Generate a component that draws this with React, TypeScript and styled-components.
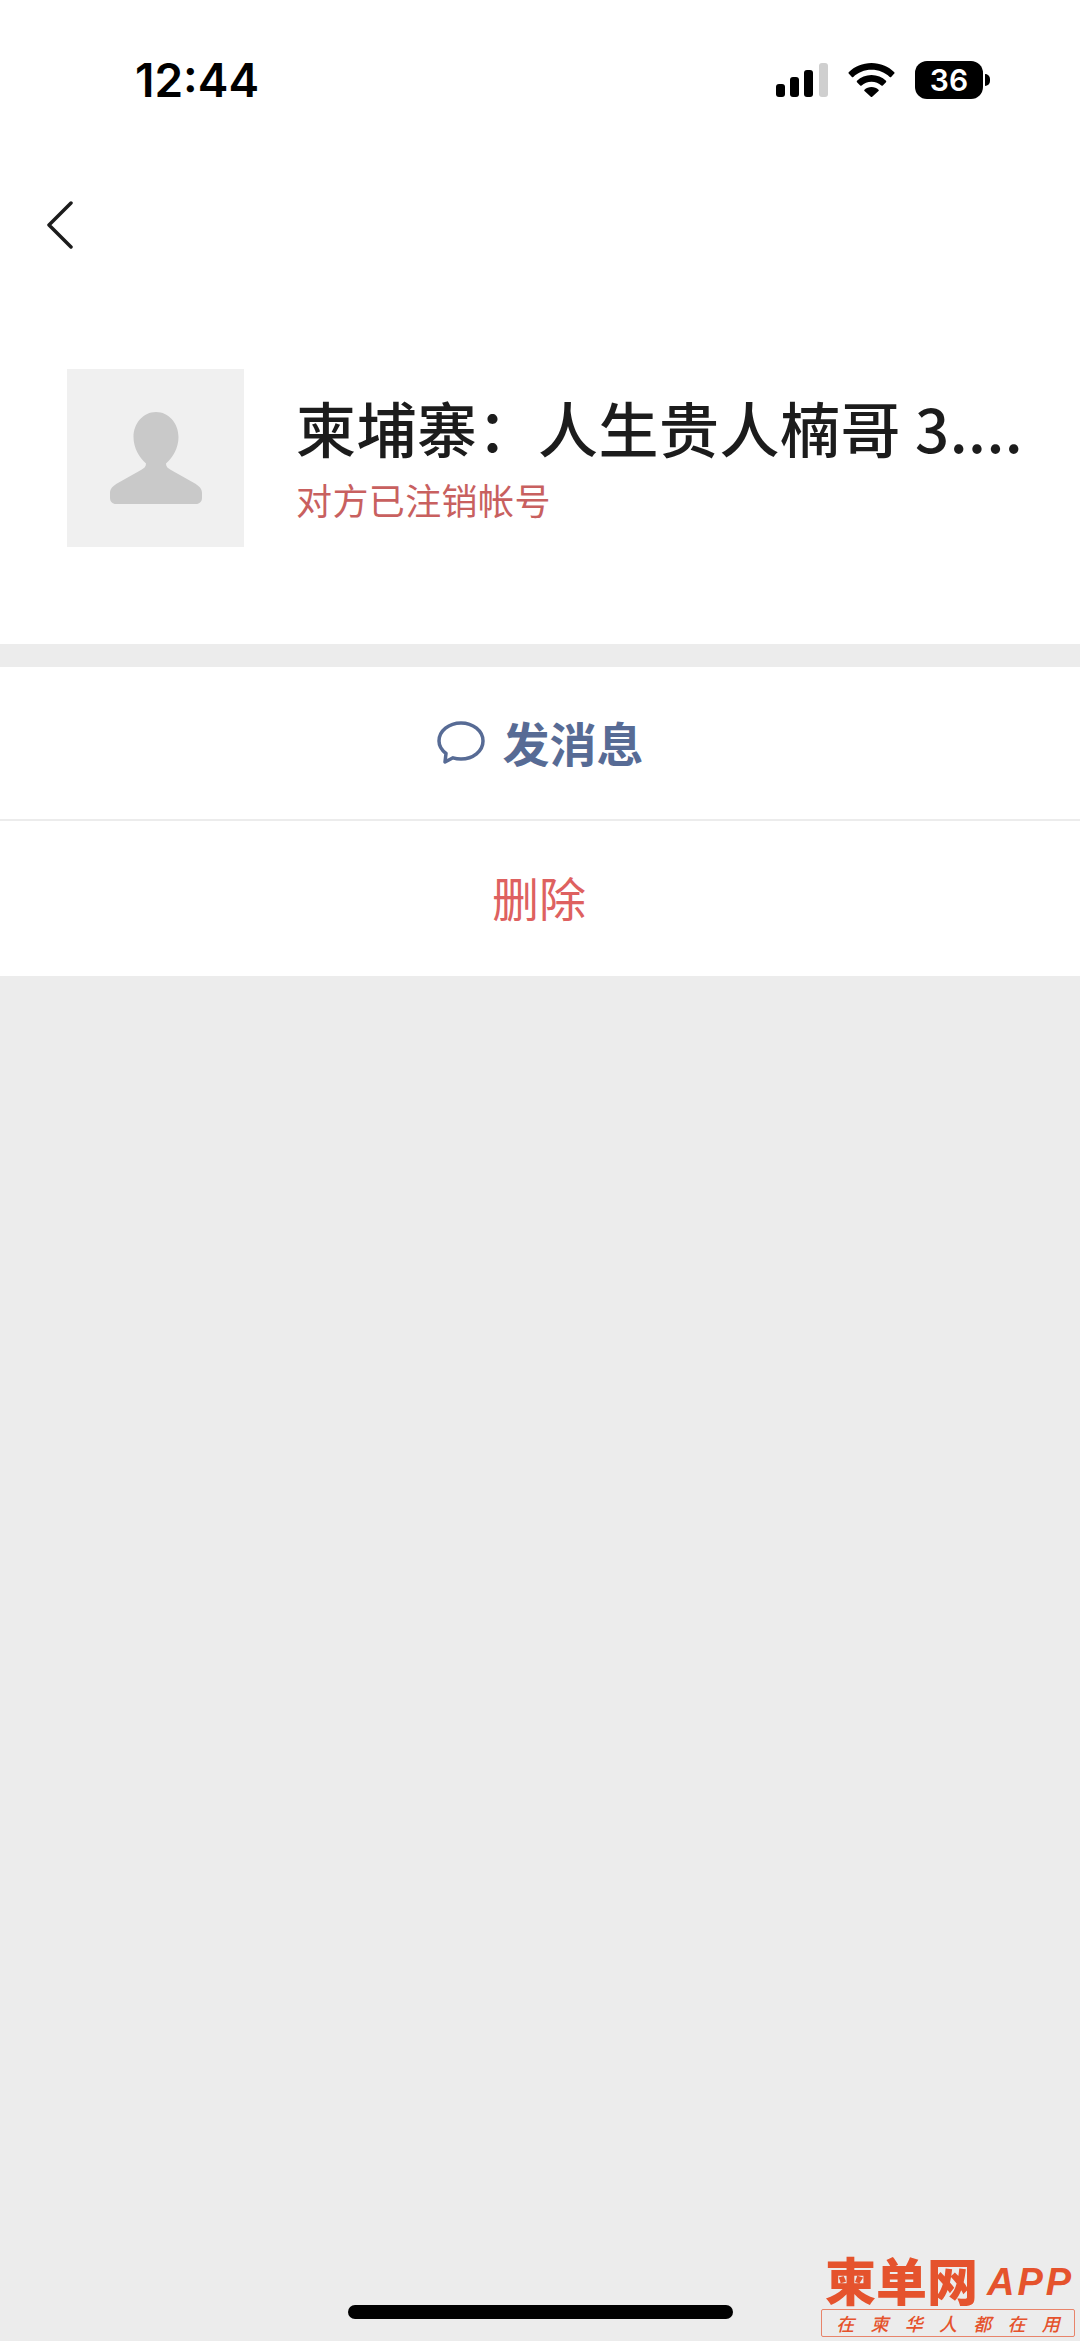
import React from 'react';
import styled, { createGlobalStyle } from 'styled-components';

const GlobalStyle = createGlobalStyle`
  * {
    box-sizing: border-box;
    margin: 0;
    padding: 0;
  }

  body {
    background: #ececec;
    font-family: "Noto Sans CJK SC", "Noto Sans", sans-serif;
  }
`;

const Page = styled.div`
  position: relative;
  width: 1080px;
  height: 2341px;
  overflow: hidden;
  display: flex;
  flex-direction: column;
  background: #ececec;
`;

const Header = styled.header`
  background: #fff;
  height: 644px;
  display: flex;
  flex-direction: column;
`;

const StatusBar = styled.div`
  height: 160px;
  padding: 61px 97px 0 135px;
  display: flex;
  justify-content: space-between;
  align-items: flex-start;
`;

const Time = styled.span`
  font-family: Inter, sans-serif;
  font-size: 46px;
  line-height: 38px;
  font-weight: 600;
  color: #000;
`;

const StatusIcons = styled.div`
  display: flex;
  align-items: center;
  height: 38px;
  gap: 20px;
`;

const Battery = styled.div`
  position: relative;
  width: 68px;
  height: 38px;
  border-radius: 12px;
  background: #000;
  color: #fff;
  font-family: Inter, sans-serif;
  font-size: 30px;
  font-weight: 600;
  line-height: 38px;
  text-align: center;

  &::after {
    content: '';
    position: absolute;
    right: -7px;
    top: 13px;
    width: 5px;
    height: 12px;
    border-radius: 0 6px 6px 0;
    background: #000;
  }
`;

const BackRow = styled.div`
  height: 209px;
  padding: 41px 0 0 46px;
`;

const Profile = styled.div`
  display: flex;
  align-items: center;
  padding-left: 67px;
  gap: 52px;
`;

const Avatar = styled.div`
  width: 177px;
  height: 178px;
  flex: none;
  background: #f0f0f0;
  display: flex;
  align-items: center;
  justify-content: center;
`;

const Info = styled.div`
  display: flex;
  flex-direction: column;
  padding-bottom: 8px;
`;

const Name = styled.h1`
  font-size: 60px;
  line-height: 84px;
  font-weight: 500;
  letter-spacing: 0.5px;
  color: #1c1c1c;
  white-space: nowrap;
  margin-bottom: 6px;
`;

const Notice = styled.p`
  font-size: 36px;
  line-height: 48px;
  font-weight: 400;
  letter-spacing: 0.4px;
  color: #c8605f;
  white-space: nowrap;
`;

const Actions = styled.section`
  margin-top: 23px;
  background: #fff;
  display: flex;
  flex-direction: column;
`;

const ActionRow = styled.div<{ $divided?: boolean; $height: number }>`
  height: ${(props) => props.$height}px;
  display: flex;
  align-items: center;
  justify-content: center;
  gap: 18px;
  border-bottom: ${(props) => (props.$divided ? '2px solid #ececec' : 'none')};
`;

const ActionLabel = styled.span<{ $danger?: boolean }>`
  font-size: 47px;
  line-height: 60px;
  font-weight: ${(props) => (props.$danger ? 400 : 700)};
  color: ${(props) => (props.$danger ? '#de6160' : '#576b95')};
  margin-bottom: 3px;
  margin-right: ${(props) => (props.$danger ? 2 : 0)}px;
`;

const HomeBar = styled.div`
  position: absolute;
  left: 348px;
  bottom: 22px;
  width: 385px;
  height: 14px;
  border-radius: 7px;
  background: #000;
`;

const Watermark = styled.div`
  position: absolute;
  right: 5px;
  bottom: 4px;
  width: 254px;
  display: flex;
  flex-direction: column;
  align-items: stretch;
  color: #e5532d;
`;

const BrandRow = styled.div`
  display: flex;
  align-items: flex-end;
  padding-left: 4px;
  height: 56px;
`;

const BrandName = styled.span`
  font-size: 51px;
  line-height: 56px;
  font-weight: 900;
`;

const BrandApp = styled.span`
  font-family: "Liberation Sans", sans-serif;
  font-size: 38px;
  line-height: 50px;
  font-weight: 700;
  font-style: italic;
  letter-spacing: 3px;
  margin-left: 9px;
`;

const Slogan = styled.div`
  height: 28px;
  margin-top: 2px;
  border: 1px solid #e8846a;
  border-radius: 2px;
  display: flex;
  align-items: center;
  justify-content: space-around;
  padding: 0 6px;
  font-size: 18px;
  line-height: 24px;
  font-weight: 500;
  font-style: italic;
`;

const slogan = ['在', '柬', '华', '人', '都', '在', '用'];

export default function App() {
  return (
    <Page>
      <GlobalStyle />
      <Header>
        <StatusBar>
          <Time>12:44</Time>
          <StatusIcons>
            <svg width="52" height="34" viewBox="0 0 52 34">
              <rect x="0" y="21" width="9" height="13" rx="3" fill="#000" />
              <rect x="14" y="14" width="9" height="20" rx="3" fill="#000" />
              <rect x="28" y="7" width="9" height="27" rx="3" fill="#000" />
              <rect x="43" y="0" width="9" height="34" rx="3" fill="#cfcfcf" />
            </svg>
            <svg width="47" height="34" viewBox="0 0 47 34" fill="#000">
              <path d="M23.5 0C14.6 0 6.6 3.5.7 9.2c-.4.4-.4 1 0 1.4l3.2 3.3c.4.4 1 .4 1.4 0C10 9.400 16.400 6.700 23.500 6.700s13.500 2.700 18.200 7.200c.4.4 1 .4 1.400 0l3.200-3.300c.4-.4.4-1 0-1.400C40.400 3.500 32.400 0 23.500 0z" />
              <path d="M23.500 12c-5.600 0-10.700 2.200-14.500 5.800-.4.4-.4 1 0 1.400l3.200 3.300c.4.4 1 .4 1.400 0 2.600-2.400 6-3.800 9.900-3.800s7.300 1.400 9.900 3.800c.4.4 1 .4 1.400 0l3.200-3.300c.4-.4.4-1 0-1.400C34.200 14.200 29.100 12 23.500 12z" />
              <path d="M23.500 24c-2.700 0-5.200 1-7 2.700-.4.4-.4 1 0 1.400l6.300 5.600c.4.4 1 .4 1.400 0l6.300-5.600c.4-.4.4-1 0-1.400-1.800-1.700-4.300-2.700-7-2.700z" />
            </svg>
            <Battery>36</Battery>
          </StatusIcons>
        </StatusBar>
        <BackRow>
          <svg width="28" height="48" viewBox="0 0 28 48" fill="none">
            <path d="M25 2 3 24l22 22" stroke="#1c1c1c" strokeWidth="3.500" strokeLinecap="round" strokeLinejoin="round" />
          </svg>
        </BackRow>
        <Profile>
          <Avatar>
            <svg width="92" height="92" viewBox="0 0 92 92" fill="#c9c9c9">
              <path d="M46 0c12.500 0 22.500 11 22.500 25 0 11-5.500 20-12.500 26.500 0 3 1.500 4.500 5 6.500l24 13.500c4 2.500 7 5 7 9.500V86c0 3.500-2.500 6-6 6H6c-3.500 0-6-2.500-6-6v-5c0-4.500 3-7 7-9.500L31 58c3.500-2 5-3.500 5-6.500C29 45 23.500 36 23.500 25 23.500 11 33.500 0 46 0z" />
            </svg>
          </Avatar>
          <Info>
            <Name>柬埔寨：人生贵人楠哥 3....</Name>
            <Notice>对方已注销帐号</Notice>
          </Info>
        </Profile>
      </Header>
      <Actions>
        <ActionRow $divided $height={154}>
          <svg width="48" height="44" viewBox="0 0 48 44" fill="none">
            <path d="M24 2c12 0 22 7.800 22 18s-10 18-22 18c-2.800 0-5.500-.4-8-1.200L8 41l1-8.500C4.800 29.200 2 24.900 2 20 2 9.800 12 2 24 2z" stroke="#576b95" strokeWidth="3.500" strokeLinejoin="round" />
          </svg>
          <ActionLabel>发消息</ActionLabel>
        </ActionRow>
        <ActionRow $height={155}>
          <ActionLabel $danger>删除</ActionLabel>
        </ActionRow>
      </Actions>
      <Watermark>
        <BrandRow>
          <BrandName>柬单网</BrandName>
          <BrandApp>APP</BrandApp>
        </BrandRow>
        <Slogan>
          {slogan.map((ch, i) => (
            <span key={i}>{ch}</span>
          ))}
        </Slogan>
      </Watermark>
      <HomeBar />
    </Page>
  );
}
